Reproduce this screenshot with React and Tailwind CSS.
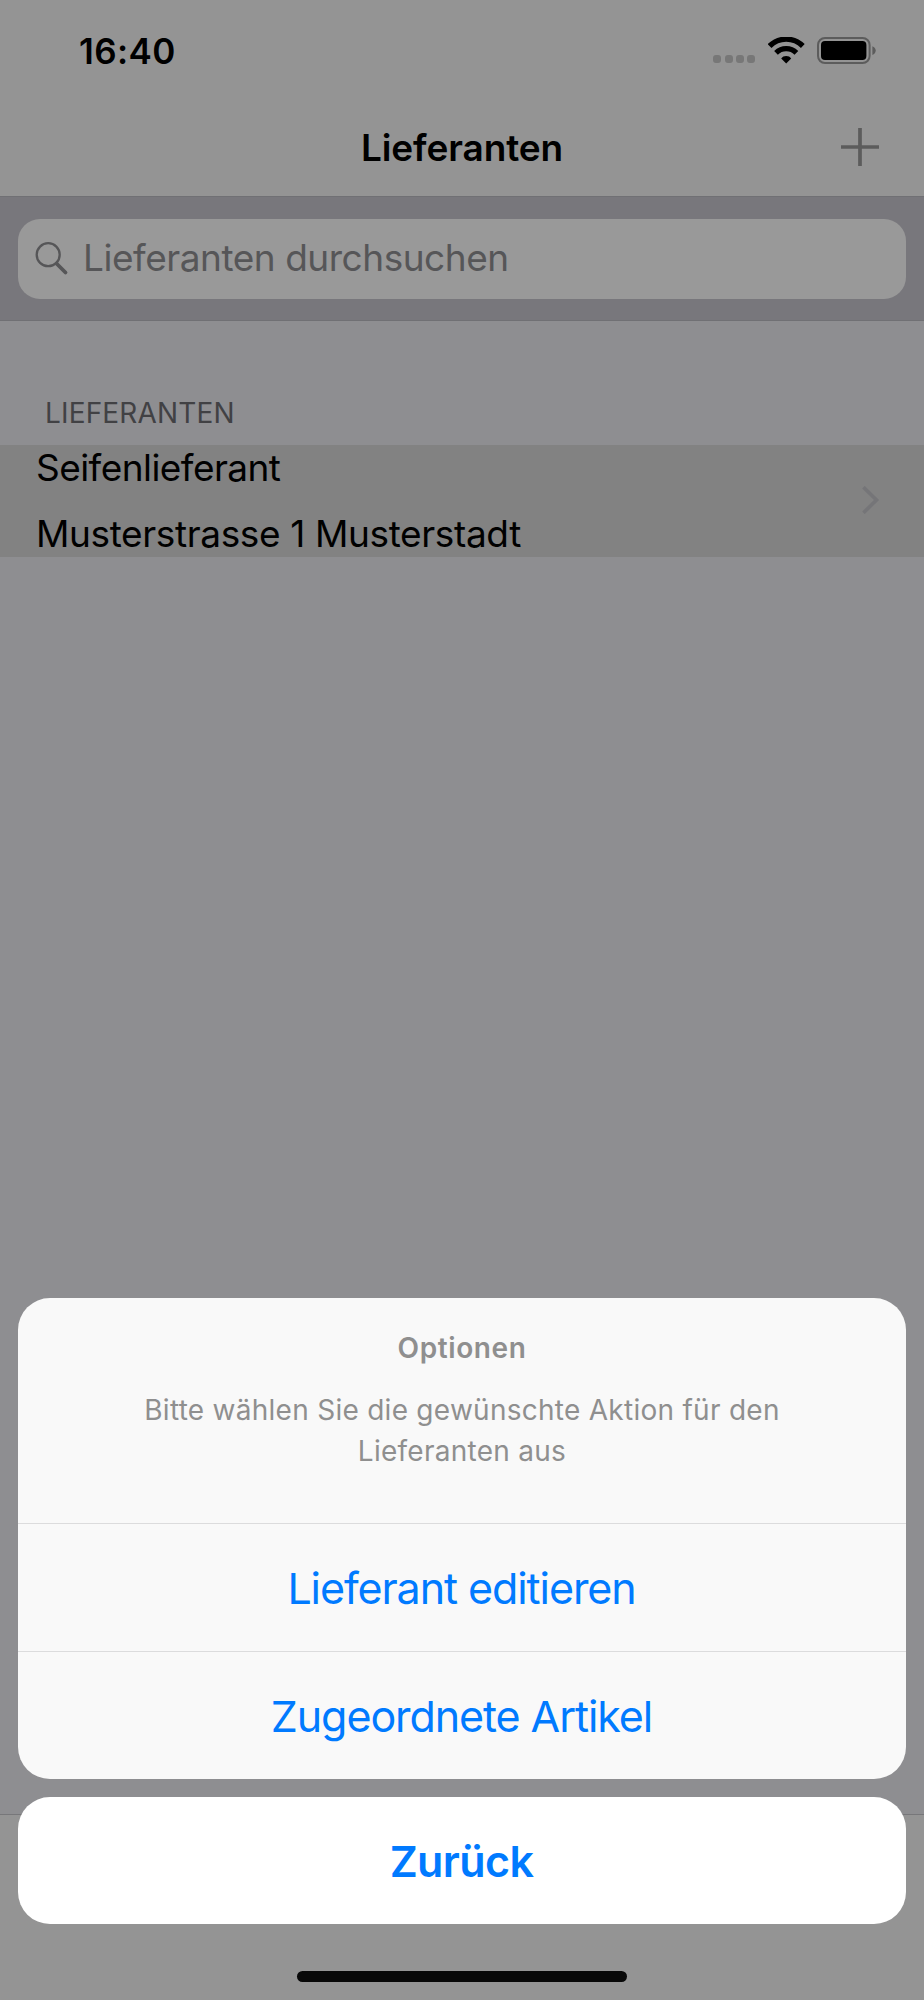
const actions = ['Lieferant editieren', 'Zugeordnete Artikel'];

const WifiIcon = () => (
    <svg width="37" height="27" viewBox="0 0 37 27" fill="none" stroke="#000">
        <path d="M1.6 9a23.5 23.5 0 0 1 33.2 0" strokeWidth="5.3" />
        <path d="M8 15.8a14.6 14.6 0 0 1 20.4 0" strokeWidth="5.3" />
        <path d="M18.2 26.600l-5-5c1.100-1.800 2.900-2.600 5-2.600s3.900.8 5 2.600z" fill="#000" stroke="none" />
    </svg>
);

const BatteryIcon = () => (
    <svg width="60" height="27" viewBox="0 0 60 27" fill="none">
        <rect x="1" y="1" width="51.6" height="25" rx="7" stroke="#5c5c5c" strokeWidth="2" />
        <rect x="4" y="4" width="45.4" height="19" rx="4" fill="#000" />
        <path d="M55.4 9.2c2 .8 3.3 2.4 3.3 4.4s-1.3 3.6-3.3 4.4z" fill="#5c5c5c" />
    </svg>
);

const StatusBar = () => (
    <div className="flex h-[101px] items-center justify-between pr-[47px] pl-[79px]">
        <span className="mt-px text-[35px] font-semibold tracking-[0.4px]">16:40</span>
        <div className="flex items-center">
            <div className="mt-[17px] mr-[13px] flex gap-[3.2px]">
                {[0, 1, 2, 3].map((dot) => (
                    <span key={dot} className="h-2 w-2 rounded-[3px] bg-[#777777]" />
                ))}
            </div>
            <WifiIcon />
            <div className="ml-3">
                <BatteryIcon />
            </div>
        </div>
    </div>
);

const NavBar = () => (
    <div className="grid h-[92px] grid-cols-3 items-center">
        <h1 className="col-start-2 mt-px text-center text-[37px] leading-[46px] font-semibold tracking-[-0.1px]">
            Lieferanten
        </h1>
        <button className="mr-[45px] mb-px justify-self-end" aria-label="Lieferant hinzufügen">
            <svg width="38" height="38" viewBox="0 0 38 38" stroke="#5c5c5c" strokeWidth="3.7">
                <path d="M19 0v38M0 19h38" />
            </svg>
        </button>
    </div>
);

const SearchBar = () => (
    <div className="h-[125px] border-y border-[#707074] bg-[#78777c] px-[18px] pt-[22px]">
        <div className="flex h-20 items-center rounded-[22px] bg-[#999999] pl-[17px] text-[#565658]">
            <svg width="34" height="34" viewBox="0 0 34 34" fill="none" stroke="currentColor">
                <circle cx="13.2" cy="12.7" r="11.5" strokeWidth="2.3" />
                <path d="M21.5 21.5l9 9" strokeWidth="3.8" strokeLinecap="round" />
            </svg>
            <span className="mb-[3px] ml-[14px] text-[37px] leading-[46px] tracking-[-0.47px]">
                Lieferanten durchsuchen
            </span>
        </div>
    </div>
);

const SupplierList = () => (
    <section className="flex-1">
        <h2 className="h-[124px] pt-[74px] pl-[45px] text-[28px] leading-[36px] tracking-[0.15px] text-[#414144]">
            LIEFERANTEN
        </h2>
        <div className="flex h-[112px] items-center justify-between bg-[#828282] pr-[44px] pl-9">
            <div className="text-[37px] leading-[66px]">
                <p className="tracking-[-0.55px]">Seifenlieferant</p>
                <p className="tracking-[-0.37px]">Musterstrasse 1 Musterstadt</p>
            </div>
            <svg className="mb-0.5" width="18" height="28" viewBox="0 0 18 28" fill="none" stroke="#757578" strokeWidth="3.6">
                <path d="M1.5 1.2L14.5 14L1.5 26.8" />
            </svg>
        </div>
    </section>
);

const ActionSheet = () => (
    <div className="absolute inset-x-[18px] top-[1298px] text-center text-[#007aff]">
        <div className="overflow-hidden rounded-[32px] bg-[#f9f9f9]">
            <div className="h-[225px] pt-[30px] text-[28px] leading-[41px] text-[#8f8f8f]">
                <p className="font-semibold tracking-[0.6px]">Optionen</p>
                <p className="mx-auto mt-[21px] w-[680px] tracking-[0.27px]">
                    Bitte wählen Sie die gewünschte Aktion für den Lieferanten aus
                </p>
            </div>
            {actions.map((action) => (
                <button
                    key={action}
                    className="block h-32 w-full border-t border-[#dcdcdd] pt-0.5 pr-px text-[43px] tracking-[-1.08px]"
                >
                    {action}
                </button>
            ))}
        </div>
        <button className="mt-[18px] block h-[127px] w-full rounded-[32px] bg-white pt-px pr-px text-[43px] font-semibold tracking-[-0.6px]">
            Zurück
        </button>
    </div>
);

const App = () => {
    return (
        <div className="relative flex h-[2000px] w-[924px] flex-col overflow-hidden bg-[#8e8e91] font-['Inter',sans-serif] text-black">
            <header className="h-[196px] bg-[#949494]">
                <StatusBar />
                <NavBar />
            </header>
            <SearchBar />
            <SupplierList />
            {/* Bottom toolbar with home indicator */}
            <footer className="flex h-[186px] items-end justify-center border-t border-[#77777a] bg-[#949494] pb-[18px]">
                <div className="h-[11px] w-[330px] rounded-full bg-[#080808]" />
            </footer>
            <ActionSheet />
        </div>
    );
};

export default App;
